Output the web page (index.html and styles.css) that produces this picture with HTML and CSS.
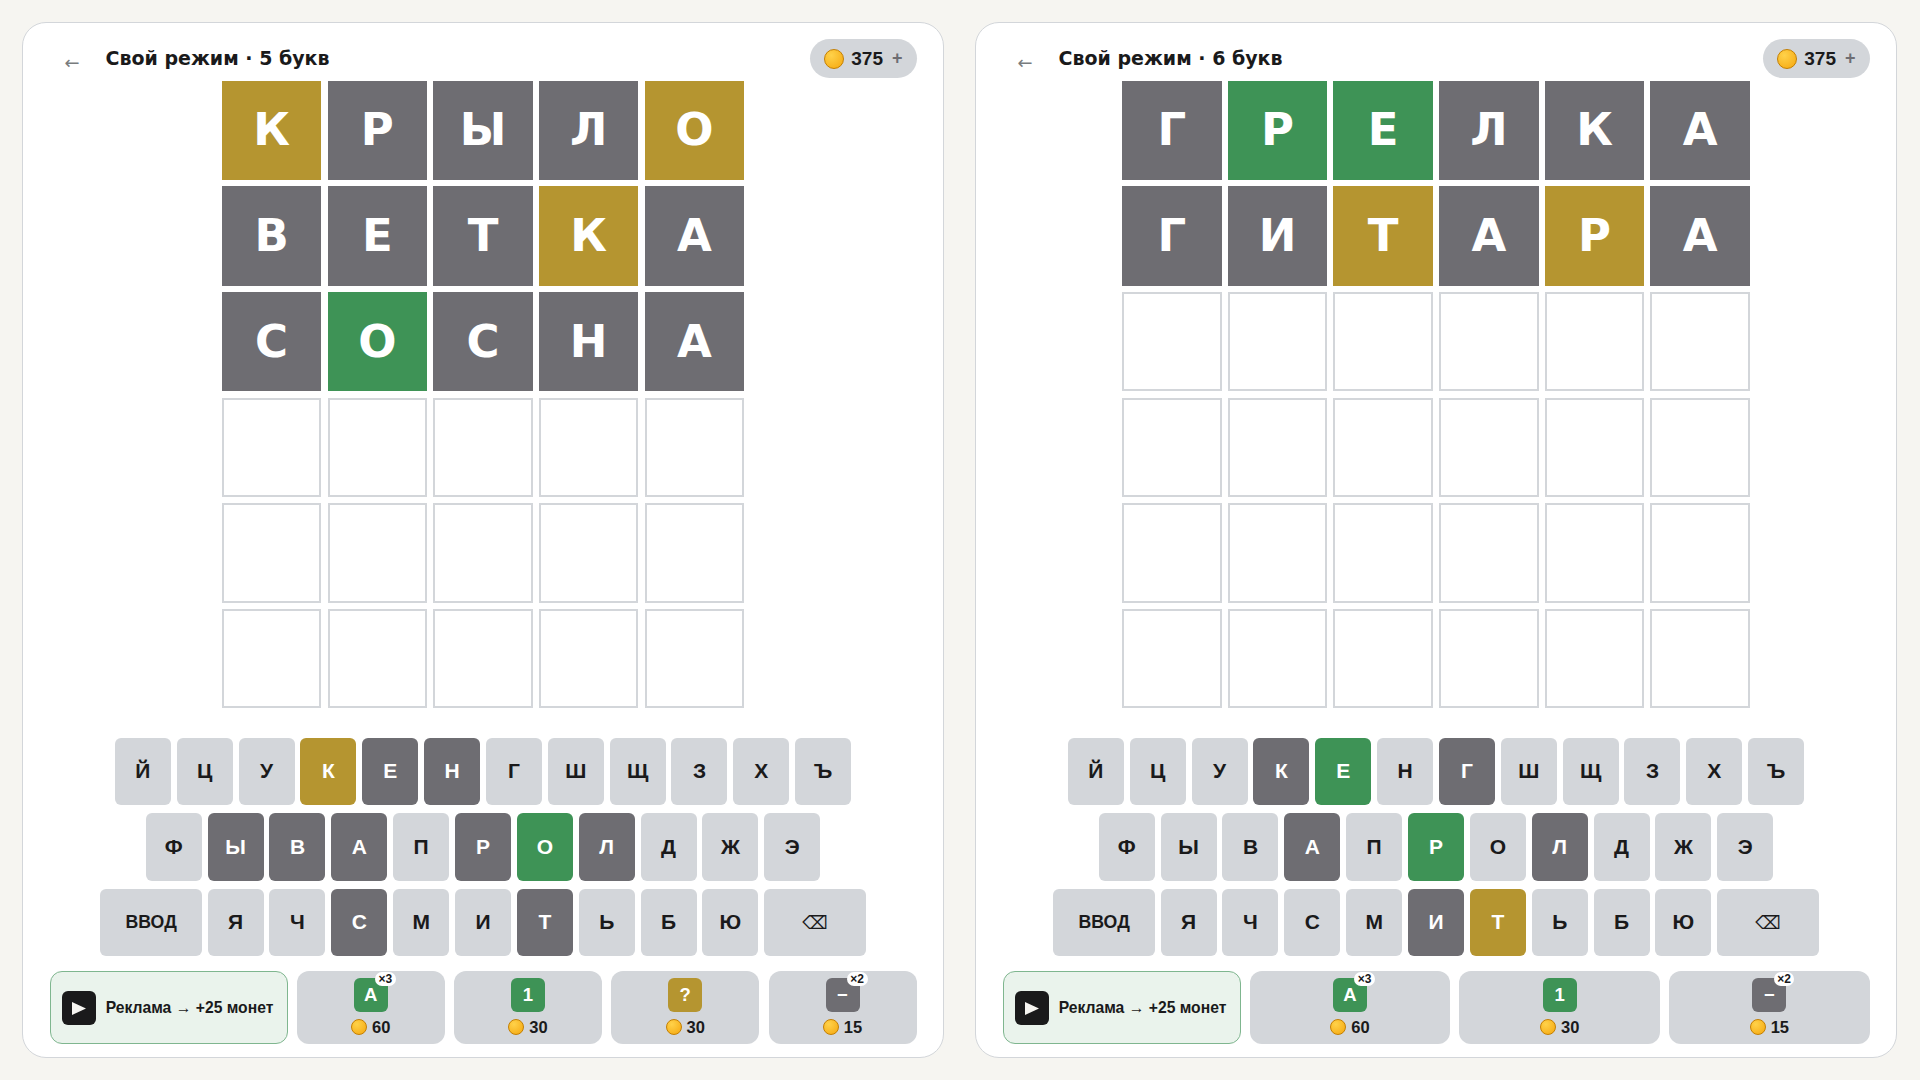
FILE: index.html
```html
<!DOCTYPE html>
<html lang="ru">
<head>
<meta charset="utf-8">
<title>Свой режим</title>
<link rel="stylesheet" href="styles.css">
</head>
<body>

<div class="card">
	<div class="header">
		<span class="back">←</span>
		<span class="title">Свой режим · 5 букв</span>
		<span class="wallet"><i class="coin"></i><b>375</b><span class="plus">+</span></span>
	</div>
	<div class="board">
		<div class="row">
			<div class="tile gold">К</div><div class="tile gray">Р</div><div class="tile gray">Ы</div><div class="tile gray">Л</div><div class="tile gold">О</div>
		</div>
		<div class="row">
			<div class="tile gray">В</div><div class="tile gray">Е</div><div class="tile gray">Т</div><div class="tile gold">К</div><div class="tile gray">А</div>
		</div>
		<div class="row">
			<div class="tile gray">С</div><div class="tile green">О</div><div class="tile gray">С</div><div class="tile gray">Н</div><div class="tile gray">А</div>
		</div>
		<div class="row">
			<div class="tile"></div><div class="tile"></div><div class="tile"></div><div class="tile"></div><div class="tile"></div>
		</div>
		<div class="row">
			<div class="tile"></div><div class="tile"></div><div class="tile"></div><div class="tile"></div><div class="tile"></div>
		</div>
		<div class="row">
			<div class="tile"></div><div class="tile"></div><div class="tile"></div><div class="tile"></div><div class="tile"></div>
		</div>
	</div>
	<div class="keyboard">
		<div class="keys">
			<div class="key">Й</div><div class="key">Ц</div><div class="key">У</div><div class="key gold">К</div><div class="key gray">Е</div><div class="key gray">Н</div><div class="key">Г</div><div class="key">Ш</div><div class="key">Щ</div><div class="key">З</div><div class="key">Х</div><div class="key">Ъ</div>
		</div>
		<div class="keys">
			<div class="key">Ф</div><div class="key gray">Ы</div><div class="key gray">В</div><div class="key gray">А</div><div class="key">П</div><div class="key gray">Р</div><div class="key green">О</div><div class="key gray">Л</div><div class="key">Д</div><div class="key">Ж</div><div class="key">Э</div>
		</div>
		<div class="keys">
			<div class="key wide enter">ВВОД</div><div class="key">Я</div><div class="key">Ч</div><div class="key gray">С</div><div class="key">М</div><div class="key">И</div><div class="key gray">Т</div><div class="key">Ь</div><div class="key">Б</div><div class="key">Ю</div><div class="key wide erase">⌫</div>
		</div>
	</div>
	<div class="helpers">
		<div class="ad">
			<span class="play"><svg width="16" height="16" viewBox="0 0 16 16"><path d="M1 2 L15 8.5 L1 15 Z" fill="#f6f5f1"/></svg></span>
			<span>Реклама → +25 монет</span>
		</div>
		<div class="boost">
			<span class="icon green">А<em>×3</em></span>
			<span class="price"><i class="coin small"></i>60</span>
		</div>
		<div class="boost">
			<span class="icon green">1</span>
			<span class="price"><i class="coin small"></i>30</span>
		</div>
		<div class="boost">
			<span class="icon gold">?</span>
			<span class="price"><i class="coin small"></i>30</span>
		</div>
		<div class="boost">
			<span class="icon gray">−<em>×2</em></span>
			<span class="price"><i class="coin small"></i>15</span>
		</div>
	</div>
</div>

<div class="card">
	<div class="header">
		<span class="back">←</span>
		<span class="title">Свой режим · 6 букв</span>
		<span class="wallet"><i class="coin"></i><b>375</b><span class="plus">+</span></span>
	</div>
	<div class="board">
		<div class="row">
			<div class="tile gray">Г</div><div class="tile green">Р</div><div class="tile green">Е</div><div class="tile gray">Л</div><div class="tile gray">К</div><div class="tile gray">А</div>
		</div>
		<div class="row">
			<div class="tile gray">Г</div><div class="tile gray">И</div><div class="tile gold">Т</div><div class="tile gray">А</div><div class="tile gold">Р</div><div class="tile gray">А</div>
		</div>
		<div class="row">
			<div class="tile"></div><div class="tile"></div><div class="tile"></div><div class="tile"></div><div class="tile"></div><div class="tile"></div>
		</div>
		<div class="row">
			<div class="tile"></div><div class="tile"></div><div class="tile"></div><div class="tile"></div><div class="tile"></div><div class="tile"></div>
		</div>
		<div class="row">
			<div class="tile"></div><div class="tile"></div><div class="tile"></div><div class="tile"></div><div class="tile"></div><div class="tile"></div>
		</div>
		<div class="row">
			<div class="tile"></div><div class="tile"></div><div class="tile"></div><div class="tile"></div><div class="tile"></div><div class="tile"></div>
		</div>
	</div>
	<div class="keyboard">
		<div class="keys">
			<div class="key">Й</div><div class="key">Ц</div><div class="key">У</div><div class="key gray">К</div><div class="key green">Е</div><div class="key">Н</div><div class="key gray">Г</div><div class="key">Ш</div><div class="key">Щ</div><div class="key">З</div><div class="key">Х</div><div class="key">Ъ</div>
		</div>
		<div class="keys">
			<div class="key">Ф</div><div class="key">Ы</div><div class="key">В</div><div class="key gray">А</div><div class="key">П</div><div class="key green">Р</div><div class="key">О</div><div class="key gray">Л</div><div class="key">Д</div><div class="key">Ж</div><div class="key">Э</div>
		</div>
		<div class="keys">
			<div class="key wide enter">ВВОД</div><div class="key">Я</div><div class="key">Ч</div><div class="key">С</div><div class="key">М</div><div class="key gray">И</div><div class="key gold">Т</div><div class="key">Ь</div><div class="key">Б</div><div class="key">Ю</div><div class="key wide erase">⌫</div>
		</div>
	</div>
	<div class="helpers">
		<div class="ad">
			<span class="play"><svg width="16" height="16" viewBox="0 0 16 16"><path d="M1 2 L15 8.5 L1 15 Z" fill="#f6f5f1"/></svg></span>
			<span>Реклама → +25 монет</span>
		</div>
		<div class="boost">
			<span class="icon green">А<em>×3</em></span>
			<span class="price"><i class="coin small"></i>60</span>
		</div>
		<div class="boost">
			<span class="icon green">1</span>
			<span class="price"><i class="coin small"></i>30</span>
		</div>
		<div class="boost">
			<span class="icon gray">−<em>×2</em></span>
			<span class="price"><i class="coin small"></i>15</span>
		</div>
	</div>
</div>

</body>
</html>
```

FILE: styles.css
```css
* {
	box-sizing: border-box;
}

body {
	margin: 0;
	height: 1080px;
	padding: 22px 23px 22px 22px;
	display: flex;
	gap: 31px;
	background-color: #f6f5f1;
	color: #1a1a1b;
	font-family: "Liberation Sans", sans-serif;
	overflow: hidden;
}

.card {
	flex: 0 0 922px;
	height: 1036px;
	padding: 16px 26.5px 13px;
	display: flex;
	flex-direction: column;
	background-color: #fff;
	border: 1.5px solid #d3d6da;
	border-radius: 24px;
}

.header {
	height: 39px;
	display: flex;
	align-items: center;
}

.back {
	width: 56px;
	padding-left: 15px;
	padding-top: 8px;
	color: #787c7e;
	font-family: "DejaVu Sans", sans-serif;
	font-size: 18px;
}

.title {
	padding-bottom: 2px;
	font-family: "DejaVu Sans", sans-serif;
	font-size: 19px;
	font-weight: bold;
}

.wallet {
	margin-left: auto;
	height: 39px;
	padding: 0 14px;
	display: flex;
	align-items: center;
	background-color: #d3d6da;
	border-radius: 20px;
	font-size: 19px;
}

.wallet b {
	margin-left: 7px;
}

.plus {
	margin-left: 9px;
	color: #6e6d72;
	font-weight: bold;
	font-size: 18px;
}

.coin {
	display: block;
	width: 20px;
	height: 20px;
	border: 1px solid #c47f00;
	border-radius: 50%;
	background: radial-gradient(circle at 35% 30%, #ffd24a, #f5a70e);
}

.coin.small {
	width: 16px;
	height: 16px;
	margin-right: 5px;
}

.board {
	margin-top: 2.5px;
	display: flex;
	flex-direction: column;
	gap: 6.2px;
}

.row {
	display: flex;
	justify-content: center;
	gap: 6.2px;
}

.tile {
	width: 99.5px;
	height: 99.5px;
	padding-bottom: 1px;
	display: flex;
	align-items: center;
	justify-content: center;
	border: 2px solid #d3d6da;
	font-family: "DejaVu Sans", sans-serif;
	font-size: 45px;
	font-weight: bold;
	color: #fff;
}

.keyboard {
	margin-top: 29.3px;
	display: flex;
	flex-direction: column;
	gap: 8px;
}

.keys {
	display: flex;
	justify-content: center;
	gap: 5.85px;
}

.key {
	width: 56px;
	height: 67.4px;
	display: flex;
	align-items: center;
	justify-content: center;
	background-color: #d3d6da;
	border-radius: 6px;
	font-size: 21px;
	font-weight: bold;
}

.wide {
	width: 101.3px;
}

.enter {
	font-size: 17.7px;
}

.erase {
	font-family: "DejaVu Sans", sans-serif;
	font-weight: normal;
	font-size: 18px;
}

.gold, .key.gold {
	background-color: #b59530;
	border-color: #b59530;
	color: #fff;
}

.gray, .key.gray {
	background-color: #6e6d72;
	border-color: #6e6d72;
	color: #fff;
}

.green, .key.green {
	background-color: #3e9356;
	border-color: #3e9356;
	color: #fff;
}

.helpers {
	margin-top: 15.5px;
	height: 72.5px;
	display: flex;
	gap: 9.3px;
}

.ad {
	flex: 0 0 238px;
	padding-left: 11.8px;
	display: flex;
	align-items: center;
	gap: 9.4px;
	background-color: #eaf3ec;
	border: 1.5px solid #7fb68f;
	border-radius: 12px;
	font-size: 15.7px;
	font-weight: bold;
}

.play {
	width: 34px;
	height: 34px;
	display: flex;
	align-items: center;
	justify-content: center;
	background-color: #1a1a1b;
	border-radius: 6px;
}

.boost {
	flex: 1;
	padding-top: 7px;
	display: flex;
	flex-direction: column;
	align-items: center;
	gap: 6px;
	background-color: #d3d6da;
	border-radius: 12px;
}

.icon {
	position: relative;
	width: 34px;
	height: 34px;
	display: flex;
	align-items: center;
	justify-content: center;
	border-radius: 6px;
	font-size: 18.5px;
	font-weight: bold;
}

.icon em {
	position: absolute;
	top: -6px;
	right: -8px;
	padding: 0 3.5px;
	background-color: #fff;
	border-radius: 8px;
	color: #1a1a1b;
	font-size: 12px;
	font-style: normal;
	line-height: 14px;
}

.price {
	display: flex;
	align-items: center;
	font-size: 16.5px;
	font-weight: bold;
	line-height: 18px;
}
```
